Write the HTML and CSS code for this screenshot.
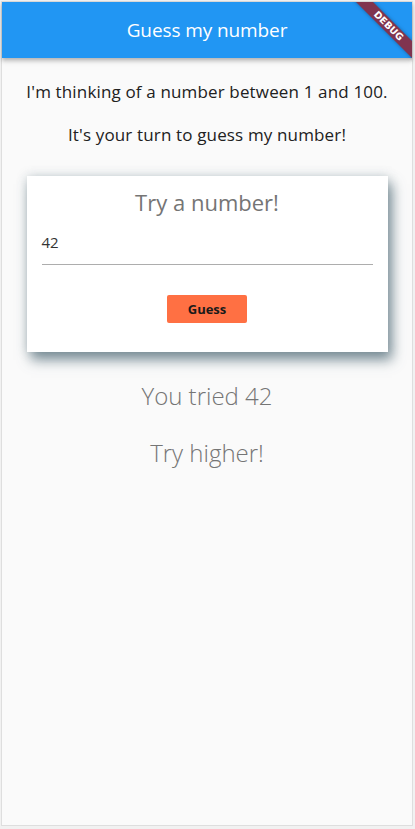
FILE: index.html
```html
<!DOCTYPE html>
<html>
<head>
<meta charset="utf-8">
<link rel="stylesheet" href="styles.css">
</head>
<body>
<div class="frame">
  <header class="appbar">
    <h1 class="title">Guess my number</h1>
    <div class="banner-clip"><div class="banner">DEBUG</div></div>
  </header>
  <main class="content">
    <p class="intro">I'm thinking of a number between 1 and 100.</p>
    <p class="intro second">It's your turn to guess my number!</p>
    <section class="card">
      <h2 class="card-title">Try a number!</h2>
      <div class="field"><span class="field-value">42</span></div>
      <div class="actions"><button class="guess-btn">Guess</button></div>
    </section>
    <p class="result">You tried 42</p>
    <p class="result hint">Try higher!</p>
  </main>
</div>
</body>
</html>
```
FILE: styles.css
```css
html, body {
  margin: 0;
  padding: 0;
}
body {
  background: #f1f1f1;
  font-family: "Open Sans", "Noto Sans", sans-serif;
  height: 829px;
  overflow: hidden;
}
.frame {
  margin: 1px 2px 0 1px;
  border: 1px solid #dedede;
  height: 823px;
  background: #fafafa;
  display: flex;
  flex-direction: column;
}
.appbar {
  position: relative;
  height: 56px;
  flex: none;
  background: #2196f3;
  display: flex;
  align-items: center;
  justify-content: center;
  box-shadow: 0 2px 4px rgba(0,0,0,0.22), 0 4px 5px rgba(0,0,0,0.10);
  z-index: 2;
}
.title {
  margin: 0;
  color: #fff;
  font-size: 19px;
  font-weight: 500;
  letter-spacing: -0.1px;
}
.banner-clip {
  position: absolute;
  top: 0;
  right: 0;
  width: 60px;
  height: 60px;
  overflow: hidden;
}
.banner {
  position: absolute;
  top: 18px;
  left: -12.5px;
  width: 97px;
  height: 12px;
  line-height: 12px;
  background: #80344f;
  color: #fff;
  font-family: "DejaVu Sans", sans-serif;
  font-size: 9.5px;
  font-weight: 700;
  text-align: center;
  transform: rotate(45deg);
  box-shadow: 0 0 4px rgba(0,0,0,0.35);
}
.content {
  display: flex;
  flex-direction: column;
  align-items: center;
  padding-top: 22px;
}
.intro {
  margin: 0;
  font-size: 17px;
  color: #212121;
  line-height: 24px;
  letter-spacing: 0.15px;
}
.intro.second {
  margin-top: 19px;
}
.card {
  margin-top: 29px;
  width: 361px;
  height: 176px;
  background: #fff;
  box-shadow: 4px 8px 12px rgba(84,110,122,0.75), 0 0 10px rgba(84,110,122,0.25);
  display: flex;
  flex-direction: column;
  align-items: stretch;
  padding: 0 15px;
  box-sizing: border-box;
}
.card-title {
  margin: 12px 0 0;
  text-align: center;
  font-size: 22px;
  font-weight: 500;
  color: #757575;
  line-height: 28px;
}
.field {
  margin-top: 12px;
  height: 37px;
  border-bottom: 1px solid #adadad;
  padding-top: 3px;
  box-sizing: border-box;
}
.field-value {
  font-size: 15px;
  color: #333;
}
.actions {
  display: flex;
  justify-content: center;
  margin-top: 30px;
}
.guess-btn {
  width: 80px;
  height: 28px;
  border: none;
  border-radius: 2px;
  background: #ff7043;
  color: #1a1a1a;
  font-family: "Open Sans", sans-serif;
  font-size: 13px;
  font-weight: 700;
  padding: 0;
}
.result {
  margin: 26px 0 0;
  font-size: 24px;
  font-weight: 300;
  color: #757575;
  line-height: 36px;
}
.result.hint {
  margin-top: 21px;
}
```
